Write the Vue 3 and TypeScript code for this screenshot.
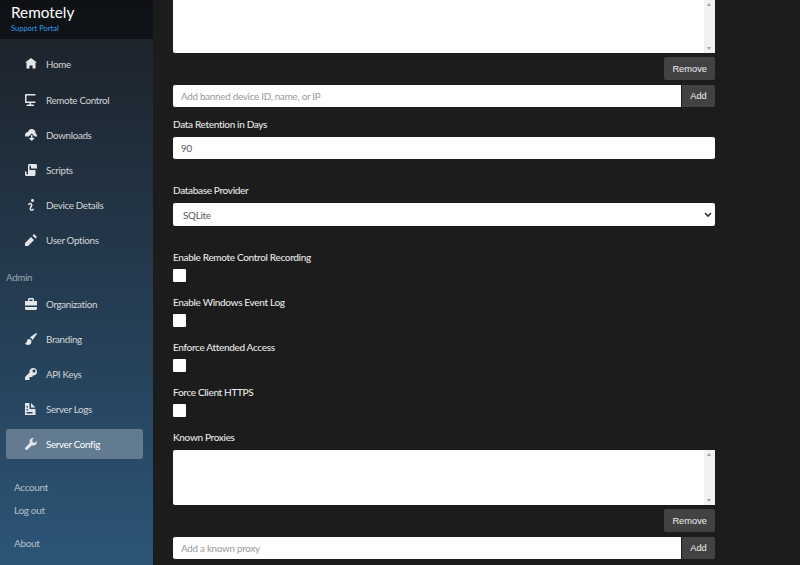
<script setup lang="ts">
interface NavItem {
  label: string
  icon: string
  active?: boolean
}

const icons: Record<string, string> = {
  home: 'M4 0l-4 3h1v4h2v-2h2v2h2v-4.03l1 .03-4-3z',
  monitor: 'M.5 0a.5.5 0 0 0-.5.5v5a.5.5 0 0 0 .5.5h2.5v1h-1c-.55 0-1 .23-1 .5v.5h5v-.5c0-.27-.45-.5-1-.5h-1v-1h2.5a.5.5 0 0 0 .5-.5v-5a.5.5 0 0 0-.5-.5h-7zm.5 1h6v4h-6v-4z',
  cloud: 'M4.5 0c-1.21 0-2.27.86-2.5 2-1.1 0-2 .9-2 2 0 .37.11.71.28 1h2.22l2-2 2 2h1.41c.06-.16.09-.32.09-.5 0-.65-.42-1.29-1-1.5v-.5c0-1.38-1.12-2.5-2.5-2.5zm-.5 4v2h-1.5l2 2 2-2h-1.5v-2h-1z',
  script: 'M3 0c-.55 0-1 .45-1 1v5.5c0 .28-.22.5-.5.5s-.5-.22-.5-.5v-1.5h-1v2c0 .55.45 1 1 1h5c.55 0 1-.45 1-1v-3h-4v-2.5c0-.28.22-.5.5-.5s.5.22.5.5v1.5h4v-2c0-.55-.45-1-1-1h-4z',
  info: 'M5 0c-.55 0-1 .45-1 1s.45 1 1 1 1-.45 1-1-.45-1-1-1zm-1.5 2.5c-.83 0-1.5.67-1.5 1.5h1c0-.28.22-.5.5-.5s.5.22.5.5-1 1.64-1 2.5c0 .86.67 1.5 1.5 1.5s1.5-.67 1.5-1.5h-1c0 .28-.22.5-.5.5s-.5-.22-.5-.5c0-.36 1-1.84 1-2.5 0-.81-.67-1.5-1.5-1.5z',
  pencil: 'M6 0l-1 1 2 2 1-1-2-2zm-2 2l-4 4v2h2l4-4-2-2z',
  briefcase: 'M3 0c-.55 0-1 .45-1 1v1h-2v3h8v-3h-2v-1c0-.55-.45-1-1-1h-2zm0 1h2v1h-2v-1zm-3 5v1c0 .55.45 1 1 1h6c.55 0 1-.45 1-1v-1h-8z',
  brush: 'M7.44.03c-.03 0-.04.02-.06.03l-3.75 2.66c-.04.03-.1.11-.13.16l-.13.25c.72.23 1.27.78 1.5 1.5l.25-.13c.05-.03.12-.08.16-.13l2.66-3.75c.03-.05.04-.09 0-.13l-.44-.44c-.02-.02-.04-.03-.06-.03zm-4.78 3.97c-.74 0-1.34.6-1.34 1.34 0 .82-.67 1.47-1.31 1.66.33.66 1.38 1 2.16 1 1.23 0 2.16-.93 2.16-2.16 0-1.01-.66-1.84-1.66-1.84z',
  key: 'M5.5 0c-1.38 0-2.5 1.12-2.5 2.5 0 .16 0 .32.03.47l-3.03 3.03v2h3v-2h2v-1l.03-.03c.15.03.31.03.47.03 1.38 0 2.5-1.12 2.5-2.5s-1.12-2.5-2.5-2.5zm.5 1c.55 0 1 .45 1 1s-.45 1-1 1-1-.45-1-1 .45-1 1-1z',
  document: 'M0 0v8h7v-4h-4v-4h-3zm4 0v3h3l-3-3zm-3 2h1v1h-1v-1zm0 2h1v1h-1v-1zm0 2h4v1h-4v-1z',
  wrench: 'M5.5 0c-1.38 0-2.5 1.12-2.5 2.5 0 .32.08.62.19.91l-2.91 2.88c-.39.39-.39 1.05 0 1.44.2.2.46.28.72.28.26 0 .52-.09.72-.28l2.88-2.91c.28.11.58.19.91.19 1.38 0 2.5-1.12 2.5-2.5 0-.16 0-.32-.03-.47l-.97.97h-2v-2l.97-.97c-.15-.03-.31-.03-.47-.03z',
}

const mainNav: NavItem[] = [
  { label: 'Home', icon: 'home' },
  { label: 'Remote Control', icon: 'monitor' },
  { label: 'Downloads', icon: 'cloud' },
  { label: 'Scripts', icon: 'script' },
  { label: 'Device Details', icon: 'info' },
  { label: 'User Options', icon: 'pencil' },
]

const adminNav: NavItem[] = [
  { label: 'Organization', icon: 'briefcase' },
  { label: 'Branding', icon: 'brush' },
  { label: 'API Keys', icon: 'key' },
  { label: 'Server Logs', icon: 'document' },
  { label: 'Server Config', icon: 'wrench', active: true },
]

const toggles = [
  'Enable Remote Control Recording',
  'Enable Windows Event Log',
  'Enforce Attended Access',
  'Force Client HTTPS',
]
</script>

<template>
  <div class="page">
    <aside class="sidebar">
      <div class="brand">
        <div class="brand-name">Remotely</div>
        <div class="brand-sub">Support Portal</div>
      </div>
      <nav class="nav">
        <a v-for="item in mainNav" :key="item.label" class="nav-item">
          <svg class="nav-icon" viewBox="0 0 8 8" fill="currentColor"><path :d="icons[item.icon]" /></svg>
          {{ item.label }}
        </a>
        <div class="nav-group">Admin</div>
        <a v-for="item in adminNav" :key="item.label" class="nav-item" :class="{ active: item.active }">
          <svg class="nav-icon" viewBox="0 0 8 8" fill="currentColor"><path :d="icons[item.icon]" /></svg>
          {{ item.label }}
        </a>
      </nav>
      <div class="account-links">
        <a>Account</a>
        <a>Log out</a>
        <a class="about">About</a>
      </div>
    </aside>

    <main class="content">
      <div class="list-box list-top">
        <div class="list-area"></div>
        <div class="scrollbar"><span class="arrow up"></span><span class="arrow down"></span></div>
      </div>
      <div class="remove-row"><button class="btn">Remove</button></div>
      <div class="input-group">
        <input class="field" type="text" placeholder="Add banned device ID, name, or IP" />
        <button class="btn">Add</button>
      </div>

      <label class="label retention">Data Retention in Days</label>
      <input class="field" type="text" value="90" />

      <label class="label provider">Database Provider</label>
      <div class="select">
        <span>SQLite</span>
        <svg width="8" height="6" viewBox="0 0 8 6" fill="none" stroke="#333" stroke-width="1.6"><path d="M1 1l3 3 3-3" /></svg>
      </div>

      <div class="toggles">
        <div v-for="name in toggles" :key="name" class="toggle">
          <label class="label">{{ name }}</label>
          <span class="check"></span>
        </div>
      </div>

      <label class="label proxies">Known Proxies</label>
      <div class="list-box">
        <div class="list-area"></div>
        <div class="scrollbar"><span class="arrow up"></span><span class="arrow down"></span></div>
      </div>
      <div class="remove-row"><button class="btn">Remove</button></div>
      <div class="input-group">
        <input class="field" type="text" placeholder="Add a known proxy" />
        <button class="btn">Add</button>
      </div>
    </main>
  </div>
</template>

<style>
html,
body {
  margin: 0;
  background: #1c1c1c;
}
</style>

<style scoped>
.page {
  display: flex;
  width: 800px;
  height: 565px;
  overflow: hidden;
  font-family: Lato, "Open Sans", sans-serif;
  font-size: 9.8px;
  letter-spacing: -0.33px;
  color: #e6e6e6;
  background: #1c1c1c;
}

.sidebar {
  width: 153px;
  flex-shrink: 0;
  background: linear-gradient(180deg, #1c2026 0%, #2c5578 100%);
}

.brand {
  height: 39px;
  box-sizing: border-box;
  padding: 2px 0 0 11px;
  letter-spacing: 0;
  background: rgba(0, 0, 0, 0.45);
}

.brand-name {
  font-size: 15.3px;
  font-weight: 400;
  line-height: 20px;
  color: #fff;
}

.brand-sub {
  margin-top: 2px;
  font-size: 7.5px;
  line-height: 10px;
  color: #2f9fe8;
}

.nav {
  padding: 10.4px 10px 0 6px;
}

.nav-item {
  display: flex;
  align-items: center;
  gap: 9px;
  height: 30px;
  margin-bottom: 5.2px;
  padding-left: 19px;
  border-radius: 3px;
  color: #d4d6d8;
}

.nav-item.active {
  background: rgba(255, 255, 255, 0.27);
  color: #fff;
}

.nav-icon {
  width: 12px;
  height: 12px;
  flex-shrink: 0;
  color: #e4e6e8;
}

.nav-group {
  height: 28px;
  line-height: 33px;
  color: #9aa8b2;
}

.account-links {
  display: flex;
  flex-direction: column;
  padding: 12px 0 0 14px;
  font-size: 10px;
  color: #b4c0ca;
}

.account-links a {
  line-height: 23px;
}

.account-links .about {
  margin-top: 10px;
}

.content {
  width: 542px;
  margin-left: 20px;
  display: flex;
  flex-direction: column;
  flex-shrink: 0;
}

.list-box {
  display: flex;
  height: 55px;
  background: #fff;
  border-radius: 2px;
}

.list-top {
  height: 53px;
  border-radius: 0 0 2px 2px;
}

.list-area {
  flex: 1;
}

.scrollbar {
  position: relative;
  width: 11px;
  background: #f1f1f1;
}

.arrow {
  position: absolute;
  left: 3px;
  width: 0;
  height: 0;
  border-left: 2.5px solid transparent;
  border-right: 2.5px solid transparent;
}

.arrow.up {
  top: 3px;
  border-bottom: 3px solid #a3a3a3;
}

.arrow.down {
  bottom: 3px;
  border-top: 3px solid #a3a3a3;
}

.remove-row {
  display: flex;
  justify-content: flex-end;
  margin-top: 4px;
}

.btn {
  height: 23px;
  padding: 0 8px;
  border: 0;
  border-radius: 2px;
  background: #424242;
  color: #f0f0f0;
  font-family: "Liberation Sans", Arial, sans-serif;
  font-size: 9.3px;
  letter-spacing: 0;
}

.input-group {
  display: flex;
  gap: 1px;
  margin-top: 5px;
}

.input-group .field {
  flex: 1;
  min-width: 0;
  border-radius: 2px 0 0 2px;
}

.input-group .btn {
  width: 33px;
  height: 22px;
  padding: 0;
  border-radius: 0 2px 2px 0;
}

.field {
  height: 22px;
  box-sizing: border-box;
  padding: 0 8px;
  border: 0;
  border-radius: 2px;
  background: #fff;
  color: #555;
  font-family: Lato, sans-serif;
  font-size: 9.8px;
  letter-spacing: -0.25px;
  outline: none;
}

.field::placeholder {
  color: #999;
  opacity: 1;
}

.label {
  display: block;
  font-size: 10px;
  font-weight: 500;
  line-height: 13px;
  color: #e8e8e8;
}

.retention {
  margin: 11px 0 6px;
}

.provider {
  margin: 25px 0 6px;
}

.select {
  display: flex;
  align-items: center;
  justify-content: space-between;
  height: 23px;
  padding: 0 3px 0 10px;
  border-radius: 2px;
  background: #fff;
  color: #555;
  font-size: 9.8px;
  letter-spacing: -0.25px;
}

.toggles {
  display: flex;
  flex-direction: column;
  gap: 14px;
  margin-top: 25px;
}

.toggle .label {
  margin-bottom: 5px;
}

.check {
  display: block;
  width: 13px;
  height: 13px;
  border-radius: 1px;
  background: #fff;
}

.proxies {
  margin: 14px 0 6px;
}
</style>
